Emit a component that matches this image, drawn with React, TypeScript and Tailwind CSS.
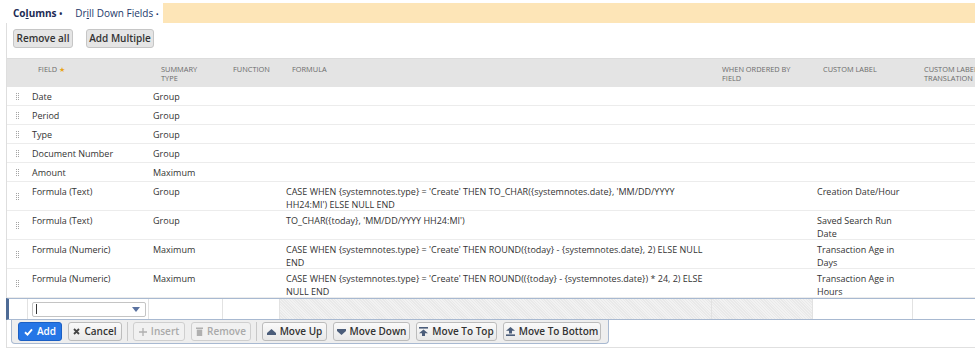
import React from "react";

type Row = {
  field: string;
  summary: string;
  formula?: string[];
  label?: string[];
};

const rows: Row[] = [
  { field: "Date", summary: "Group" },
  { field: "Period", summary: "Group" },
  { field: "Type", summary: "Group" },
  { field: "Document Number", summary: "Group" },
  { field: "Amount", summary: "Maximum" },
  {
    field: "Formula (Text)",
    summary: "Group",
    formula: [
      "CASE WHEN {systemnotes.type} = 'Create' THEN TO_CHAR({systemnotes.date}, 'MM/DD/YYYY",
      "HH24:MI') ELSE NULL END",
    ],
    label: ["Creation Date/Hour"],
  },
  {
    field: "Formula (Text)",
    summary: "Group",
    formula: ["TO_CHAR({today}, 'MM/DD/YYYY HH24:MI')"],
    label: ["Saved Search Run", "Date"],
  },
  {
    field: "Formula (Numeric)",
    summary: "Maximum",
    formula: [
      "CASE WHEN {systemnotes.type} = 'Create' THEN ROUND({today} - {systemnotes.date}, 2) ELSE NULL",
      "END",
    ],
    label: ["Transaction Age in", "Days"],
  },
  {
    field: "Formula (Numeric)",
    summary: "Maximum",
    formula: [
      "CASE WHEN {systemnotes.type} = 'Create' THEN ROUND(({today} - {systemnotes.date}) * 24, 2) ELSE",
      "NULL END",
    ],
    label: ["Transaction Age in", "Hours"],
  },
];

// column widths match the edit row's cell lines
const cols =
  "grid grid-cols-[21px_121px_74px_57px_432px_101px_100px_80px]";

const DragHandle = () => (
  <svg width="3" height="7" viewBox="0 0 3 7" aria-hidden>
    {[0, 2, 4, 6].map((y) => (
      <React.Fragment key={y}>
        <rect x="0" y={y} width="1" height="1" fill="#a3a3a3" />
        <rect x="2" y={y} width="1" height="1" fill="#a3a3a3" />
      </React.Fragment>
    ))}
  </svg>
);

const Lines = ({ lines }: { lines?: string[] }) => (
  <>
    {(lines ?? []).map((l) => (
      <div key={l} className="whitespace-nowrap">
        {l}
      </div>
    ))}
  </>
);

const btn =
  "flex h-[19px] items-center justify-center gap-[4px] rounded-[3px] border text-[10px] font-semibold";
const plainBtn = `${btn} border-[#bcbcbc] bg-[linear-gradient(#fafafa,#e8e8e8)] text-[#333]`;
const offBtn = `${btn} border-[#cfcfcf] bg-[#f1f1f1] text-[#a9a9a9]`;

const Sep = () => <div className="-mx-[1px] h-[19px] w-[1px] bg-[#c8c8c8]" />;

const iconColor = "#4b5d7a";

export default function App() {
  return (
    <div className="h-[351px] w-[975px] overflow-hidden bg-white font-['Open_Sans','Liberation_Sans',sans-serif] text-[9px] text-[#333]">
      {/* subtab strip */}
      <div className="mt-[3px] flex h-[20px]">
        <div className="flex w-[163px] items-center gap-[13px] pl-[13px] text-[10px] text-[#24396b]">
          <span className="font-bold text-[#1c2b55]">
            Co<span className="underline">l</span>umns{" "}
            <span className="text-[8px]">•</span>
          </span>
          <span>
            Dr<span className="underline">i</span>ll Down Fields{" "}
            <span className="text-[8px]">•</span>
          </span>
        </div>
        <div className="flex-1 bg-[#fde5b7]" />
      </div>

      <div className="ml-[6px] border-l border-[#dedede]">
        {/* toolbar */}
        <div className="flex h-[36px] gap-[13px] border-b border-[#dcdcdc] pl-[6px] pt-[6px]">
          <button className="h-[19px] w-[60px] rounded-[3px] border border-[#c6c6c6] bg-[#e5e5e5] text-[10px] font-semibold text-[#333]">
            Remove all
          </button>
          <button className="h-[19px] w-[68px] rounded-[3px] border border-[#c6c6c6] bg-[#e5e5e5] text-[10px] font-semibold text-[#333]">
            Add Multiple
          </button>
        </div>

        {/* header */}
        <div
          className={`${cols} h-[28px] bg-[#e4e4e4] pt-[6px] text-[7.4px] leading-[9px] text-[#6b6b6b]`}
        >
          <div />
          <div className="pl-[10px]">
            FIELD<span className="ml-[2px] align-top text-[7px] text-[#e8a317]">★</span>
          </div>
          <div className="pl-[12px]">
            SUMMARY
            <br />
            TYPE
          </div>
          <div className="pl-[10px]">FUNCTION</div>
          <div className="pl-[12px]">FORMULA</div>
          <div className="pl-[10px]">
            WHEN ORDERED BY
            <br />
            FIELD
          </div>
          <div className="pl-[10px]">CUSTOM LABEL</div>
          <div className="whitespace-nowrap pl-[11px]">
            CUSTOM LABEL
            <br />
            TRANSLATION
          </div>
        </div>

        {/* rows */}
        {rows.map((r, i) => {
          const tall = !!r.formula;
          return (
            <div
              key={i}
              className={`${cols} ${tall ? "h-[29px]" : "h-[19px]"} border-b border-[#ececec] leading-[13px]`}
            >
              <div className="flex items-center pl-[9px]">
                <DragHandle />
              </div>
              <div className="whitespace-nowrap pl-[4px] pt-[3px]">{r.field}</div>
              <div className="pl-[4px] pt-[3px]">{r.summary}</div>
              <div />
              <div className="pl-[6px] pt-[3px]">
                <Lines lines={r.formula} />
              </div>
              <div />
              <div className="pl-[4px] pt-[3px]">
                <Lines lines={r.label} />
              </div>
              <div />
            </div>
          );
        })}

        {/* edit row */}
        <div className="-ml-[1px] h-[22px] border-b border-l-[3px] border-t border-[#a8b9d1] border-l-[#4e6b96]">
          <div className="grid h-full grid-cols-[19px_121px_74px_57px_432px_101px_100px_80px]">
            <div className="border-r border-[#e2e2e2]" />
            <div className="flex items-center border-r border-[#e2e2e2] pl-[4px] pr-[2px]">
              <div className="flex h-[15px] w-full items-center justify-between rounded-[2px] border border-[#c4c4c4] bg-white pl-[3px] pr-[5px]">
                <div className="h-[10px] w-[1px] bg-[#333]" />
                <svg width="8" height="5" viewBox="0 0 8 5" aria-hidden>
                  <path d="M0 0 H8 L4 5 Z" fill="#5a72a0" />
                </svg>
              </div>
            </div>
            <div className="border-r border-[#e2e2e2]" />
            <div className="border-r border-[#e2e2e2]" />
            <div className="border-r border-[#e2e2e2] bg-[repeating-linear-gradient(45deg,#e9e9e9_0px,#e9e9e9_1px,#f2f2f2_1px,#f2f2f2_2px)]" />
            <div className="border-r border-[#e2e2e2] bg-[repeating-linear-gradient(45deg,#e9e9e9_0px,#e9e9e9_1px,#f2f2f2_1px,#f2f2f2_2px)]" />
            <div className="border-r border-[#e2e2e2]" />
            <div />
          </div>
        </div>

        {/* row action buttons */}
        <div className="ml-[4px] flex h-[24px] w-[598px] items-start gap-[6px] rounded-b-[4px] border border-t-0 border-[#a8b9d1] bg-[#eeeeee] pl-[6px] pt-[2px]">
          <button className={`${btn} w-[44px] border-[#1b5fc4] bg-[#2676e6] text-white`}>
            <svg width="9" height="8" viewBox="0 0 9 8" aria-hidden>
              <path d="M1 4.2 L3.5 6.6 L8 1.4" stroke="#fff" strokeWidth="1.9" fill="none" />
            </svg>
            Add
          </button>
          <button className={`${plainBtn} w-[54px]`}>
            <svg width="7" height="7" viewBox="0 0 7 7" aria-hidden>
              <path d="M1 1 L6 6 M6 1 L1 6" stroke="#444" strokeWidth="1.8" />
            </svg>
            Cancel
          </button>
          <Sep />
          <button className={`${offBtn} w-[52px]`}>
            <svg width="8" height="8" viewBox="0 0 8 8" aria-hidden>
              <path d="M4 0 V8 M0 4 H8" stroke="#b0b0b0" strokeWidth="1.3" />
            </svg>
            Insert
          </button>
          <button className={`${offBtn} w-[60px]`}>
            <svg width="7" height="9" viewBox="0 0 7 9" aria-hidden>
              <rect x="0" y="0.5" width="7" height="1.5" fill="#b0b0b0" />
              <rect x="0.8" y="2.6" width="5.4" height="6.4" fill="#b0b0b0" />
            </svg>
            Remove
          </button>
          <Sep />
          <button className={`${plainBtn} w-[65px]`}>
            <svg width="9" height="6" viewBox="0 0 9 6" aria-hidden>
              <path d="M4.5 0 L9 4 V6 H0 V4 Z" fill={iconColor} />
            </svg>
            Move Up
          </button>
          <button className={`${plainBtn} w-[77px]`}>
            <svg width="9" height="6" viewBox="0 0 9 6" aria-hidden>
              <path d="M0 0 H9 V2 L4.5 6 L0 2 Z" fill={iconColor} />
            </svg>
            Move Down
          </button>
          <button className={`${plainBtn} w-[81px]`}>
            <svg width="9" height="9" viewBox="0 0 9 9" aria-hidden>
              <rect x="0" y="0" width="9" height="1.6" fill={iconColor} />
              <path d="M4.5 2.4 L9 6.2 H6 V9 H3 V6.2 H0 Z" fill={iconColor} />
            </svg>
            Move To Top
          </button>
          <button className={`${plainBtn} w-[98px]`}>
            <svg width="9" height="9" viewBox="0 0 9 9" aria-hidden>
              <path d="M4.5 0 L9 3.8 H6 V6.4 H3 V3.8 H0 Z" fill={iconColor} />
              <rect x="0" y="7.4" width="9" height="1.6" fill={iconColor} />
            </svg>
            Move To Bottom
          </button>
        </div>

        <div className="mt-[3px] border-b border-[#e0e0e0]" />
      </div>
    </div>
  );
}
